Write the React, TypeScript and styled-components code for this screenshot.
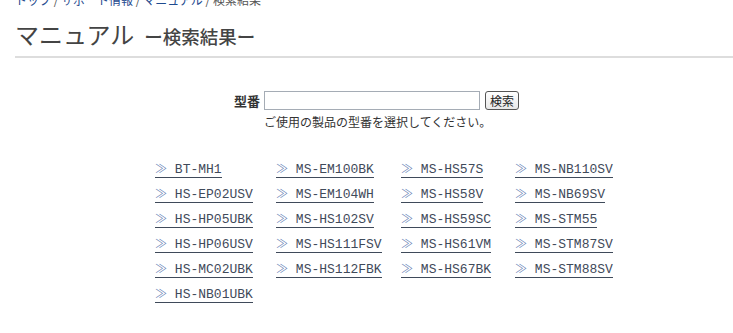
import styled, { createGlobalStyle } from 'styled-components';

const models = [
  ['BT-MH1', 'HS-EP02USV', 'HS-HP05UBK', 'HS-HP06USV', 'HS-MC02UBK', 'HS-NB01UBK'],
  ['MS-EM100BK', 'MS-EM104WH', 'MS-HS102SV', 'MS-HS111FSV', 'MS-HS112FBK'],
  ['MS-HS57S', 'MS-HS58V', 'MS-HS59SC', 'MS-HS61VM', 'MS-HS67BK'],
  ['MS-NB110SV', 'MS-NB69SV', 'MS-STM55', 'MS-STM87SV', 'MS-STM88SV'],
];

const GlobalStyle = createGlobalStyle`
  body {
    margin: 0;
    background: #fff;
    font-family: 'Noto Sans CJK JP', 'Liberation Sans', sans-serif;
    color: #333;
  }
`;

const Page = styled.div`
  padding: 0 0 0 15px;
`;

const Breadcrumb = styled.nav`
  margin-top: -8px;
  font-size: 12px;
  line-height: 16px;
  color: #555;
`;

const Crumb = styled.a`
  color: #1f4b8f;
  text-decoration: none;
`;

const Title = styled.h1`
  margin: 10px 0 0;
  padding-bottom: 4px;
  border-bottom: 2px solid #ddd;
  font-size: 24px;
  font-weight: normal;
  line-height: 32px;
  color: #444;
`;

const Sub = styled.span`
  margin-left: 10px;
  font-size: 18.5px;
  font-weight: 500;
  color: #444;
`;

const SearchForm = styled.form`
  margin: 33px 0 0 219px;
  display: grid;
  grid-template-columns: auto auto auto;
  justify-content: start;
  align-items: center;
  column-gap: 4px;
  font-size: 12px;
`;

const Label = styled.label`
  font-weight: bold;
  font-size: 13px;
`;

const Input = styled.input`
  box-sizing: border-box;
  width: 216px;
  height: 19px;
  margin: 0;
  border: 1px solid #a5acb5;
  padding: 1px 2px;
`;

const Button = styled.button`
  box-sizing: border-box;
  margin: 0 0 0 1px;
  height: 19px;
  padding: 0 4px;
  font-size: 12px;
  font-family: inherit;
  color: #222;
  background: linear-gradient(#fff, #e8e8e8);
  border: 1px solid #555;
  border-radius: 3px;
  line-height: 15px;
`;

const Help = styled.div`
  grid-column: 2 / 4;
  margin-top: 4px;
  line-height: 16px;
  color: #333;
`;

const Grid = styled.div`
  margin: 31px 0 0 140px;
  display: grid;
  grid-template-columns: 121px 125px 114px auto;
  grid-auto-flow: column;
  grid-template-rows: repeat(6, 25px);
`;

const ModelLink = styled.a`
  justify-self: start;
  align-self: start;
  font-family: 'Liberation Mono', monospace;
  font-size: 13px;
  line-height: 14px;
  color: #3f4a5a;
  text-decoration: none;
  border-bottom: 1px solid #3f4a5a;
`;

const Arrow = styled.span`
  font-family: 'Noto Sans CJK JP', sans-serif;
  font-weight: 300;
  font-size: 12px;
  color: #5a78b0;
`;

export default function App() {
  return (
    <Page>
      <GlobalStyle />
      <Breadcrumb>
        <Crumb href="#">トップ</Crumb> / <Crumb href="#">サポート情報</Crumb> / <Crumb href="#">マニュアル</Crumb> / 検索結果
      </Breadcrumb>
      <Title>
        マニュアル<Sub>ー検索結果ー</Sub>
      </Title>
      <SearchForm>
        <Label>型番</Label>
        <Input type="text" />
        <Button type="button">検索</Button>
        <Help>ご使用の製品の型番を選択してください。</Help>
      </SearchForm>
      <Grid>
        {models.map((col, ci) =>
          col.map((m, ri) => (
            <ModelLink key={m} href="#" style={{ gridColumn: ci + 1, gridRow: ri + 1 }}>
              <Arrow>≫</Arrow> {m}
            </ModelLink>
          ))
        )}
      </Grid>
    </Page>
  );
}
